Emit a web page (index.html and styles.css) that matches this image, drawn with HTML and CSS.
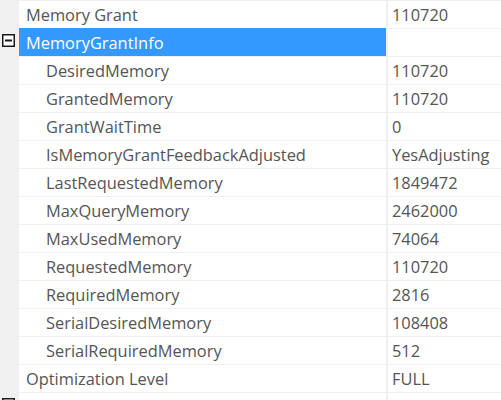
FILE: index.html
```html
<!DOCTYPE html>
<html lang="en">
<head>
  <meta charset="UTF-8">
  <title>Properties</title>
  <link rel="stylesheet" href="styles.css">
</head>
<body>
  <div class="grid">
    <div class="row">
      <div class="gutter"></div>
      <div class="name">Memory Grant</div>
      <div class="value">110720</div>
    </div>
    <div class="row">
      <div class="gutter">
        <svg class="toggle" width="13" height="13" viewBox="0 0 13 13">
          <rect x="0.75" y="0.75" width="11.5" height="11.5" fill="#fff" stroke="#1a1a1a" stroke-width="1.5"/>
          <rect x="3" y="5.5" width="7" height="2" fill="#1a1a1a"/>
        </svg>
      </div>
      <div class="name selected">MemoryGrantInfo</div>
      <div class="value"></div>
    </div>
    <div class="row">
      <div class="gutter"></div>
      <div class="name child">DesiredMemory</div>
      <div class="value">110720</div>
    </div>
    <div class="row">
      <div class="gutter"></div>
      <div class="name child">GrantedMemory</div>
      <div class="value">110720</div>
    </div>
    <div class="row">
      <div class="gutter"></div>
      <div class="name child">GrantWaitTime</div>
      <div class="value">0</div>
    </div>
    <div class="row">
      <div class="gutter"></div>
      <div class="name child">IsMemoryGrantFeedbackAdjusted</div>
      <div class="value">YesAdjusting</div>
    </div>
    <div class="row">
      <div class="gutter"></div>
      <div class="name child">LastRequestedMemory</div>
      <div class="value">1849472</div>
    </div>
    <div class="row">
      <div class="gutter"></div>
      <div class="name child">MaxQueryMemory</div>
      <div class="value">2462000</div>
    </div>
    <div class="row">
      <div class="gutter"></div>
      <div class="name child">MaxUsedMemory</div>
      <div class="value">74064</div>
    </div>
    <div class="row">
      <div class="gutter"></div>
      <div class="name child">RequestedMemory</div>
      <div class="value">110720</div>
    </div>
    <div class="row">
      <div class="gutter"></div>
      <div class="name child">RequiredMemory</div>
      <div class="value">2816</div>
    </div>
    <div class="row">
      <div class="gutter"></div>
      <div class="name child">SerialDesiredMemory</div>
      <div class="value">108408</div>
    </div>
    <div class="row">
      <div class="gutter"></div>
      <div class="name child">SerialRequiredMemory</div>
      <div class="value">512</div>
    </div>
    <div class="row">
      <div class="gutter"></div>
      <div class="name">Optimization Level</div>
      <div class="value">FULL</div>
    </div>
    <div class="row group">
      <div class="gutter">
        <svg class="toggle" width="13" height="13" viewBox="0 0 13 13">
          <rect x="0.75" y="0.75" width="11.5" height="11.5" fill="#fff" stroke="#1a1a1a" stroke-width="1.5"/>
          <rect x="3" y="5.5" width="7" height="2" fill="#1a1a1a"/>
          <rect x="5.5" y="3" width="2" height="7" fill="#1a1a1a"/>
        </svg>
      </div>
      <div class="name">Optimizer Hardware Dependent Properties</div>
      <div class="value"></div>
    </div>
  </div>
</body>
</html>
```

FILE: styles.css
```css
body {
  margin: 0;
  background-color: white;
  overflow: hidden;
}
.grid {
  width: 501px;
  font-family: "Open Sans", "Noto Sans", sans-serif;
  font-size: 16.4px;
  color: #555555;
}
.row {
  display: flex;
  height: 28px;
}
.gutter {
  width: 19px;
  flex: none;
  background-color: #f0f0f0;
  position: relative;
}
.toggle {
  position: absolute;
  left: 2px;
  top: 6px;
}
.name,
.value {
  border-top: 1px solid #f0f0f0;
  line-height: 27px;
  white-space: nowrap;
  overflow: hidden;
}
.name {
  width: 360px;
  flex: none;
  padding-left: 7px;
}
.child {
  padding-left: 27px;
  width: 340px;
}
.selected {
  background-color: #3399ff;
  color: white;
  border-top-color: #3399ff;
}
.value {
  flex: 1;
  border-left: 2px solid #f0f0f0;
  padding-left: 4px;
}
.group .name {
  font-weight: bold;
  color: #1e1e1e;
}
```
